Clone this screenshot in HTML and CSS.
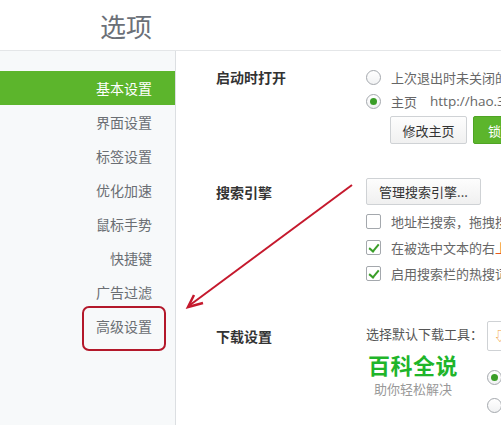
FILE: index.html
```html
<!DOCTYPE html>
<html lang="zh-CN">
<head>
  <meta charset="UTF-8" />
  <title>选项</title>
  <link rel="stylesheet" href="styles.css">
</head>
<body>
  <header class="top">
    <h1>选项</h1>
  </header>

  <div class="layout">
    <nav class="sidebar">
      <a class="nav-item active">基本设置</a>
      <a class="nav-item">界面设置</a>
      <a class="nav-item">标签设置</a>
      <a class="nav-item">优化加速</a>
      <a class="nav-item">鼠标手势</a>
      <a class="nav-item">快捷键</a>
      <a class="nav-item">广告过滤</a>
      <a class="nav-item">高级设置</a>
    </nav>

    <main class="content">
      <section class="section startup">
        <div class="section-label">启动时打开</div>
        <div class="section-body">
          <div class="opt-row"><span class="radio"></span><span>上次退出时未关闭的网页</span></div>
          <div class="opt-row"><span class="radio checked"></span><span>主页</span><span class="url">http://hao.360.cn/</span></div>
          <div class="btn-row">
            <button class="btn btn-home">修改主页</button>
            <button class="btn btn-green">锁定主页</button>
          </div>
        </div>
      </section>

      <section class="section search">
        <div class="section-label">搜索引擎</div>
        <div class="section-body">
          <button class="btn btn-wide">管理搜索引擎...</button>
          <div class="check-row"><span class="checkbox"></span><span>地址栏搜索，拖拽搜索时使用</span></div>
          <div class="check-row"><span class="checkbox checked"></span><span>在被选中文本的右<em class="hl">上</em>角显示</span></div>
          <div class="check-row"><span class="checkbox checked"></span><span>启用搜索栏的热搜词</span></div>
        </div>
      </section>

      <section class="section download">
        <div class="section-label">下载设置</div>
        <div class="section-body dl-body">
          <span class="dl-text">选择默认下载工具：</span>
          <div class="dl-col">
            <div class="select"><span class="dl-icon">⇩</span></div>
            <div class="dl-row"><span class="radio checked"></span></div>
            <div class="dl-row"><span class="radio"></span></div>
          </div>
        </div>
      </section>
    </main>
  </div>

  <div class="watermark">
    <div class="wm-title">百科全说</div>
    <div class="wm-sub">助你轻松解决</div>
  </div>

  <svg class="annotation" width="501" height="425" viewBox="0 0 501 425" xmlns="http://www.w3.org/2000/svg">
    <rect x="83" y="307" width="82" height="43" rx="6" fill="none" stroke="#b3182a" stroke-width="2"/>
    <line x1="352" y1="185" x2="190" y2="305" stroke="#c5192d" stroke-width="2"/>
    <polyline points="203,303 188,307 194,295" fill="none" stroke="#c5192d" stroke-width="2.5" stroke-linejoin="miter"/>
  </svg>
</body>
</html>
```

FILE: styles.css
```css
* {
  box-sizing: border-box;
  margin: 0;
  padding: 0;
}

html, body {
  width: 501px;
  height: 425px;
  overflow: hidden;
  background: #fff;
  font-family: "Noto Sans CJK SC", "Noto Sans", sans-serif;
  color: #333;
}

body {
  position: relative;
}

.top {
  height: 51px;
  border-bottom: 1px solid #e4e6e8;
  padding-left: 100px;
}

.top h1 {
  font-size: 26px;
  font-weight: 400;
  line-height: 52px;
  color: #6b7078;
}

.layout {
  display: flex;
  height: 374px;
}

.sidebar {
  width: 176px;
  flex: none;
  background: #f7f9fa;
  border-right: 1px solid #dcdfe2;
  padding-top: 20px;
  display: flex;
  flex-direction: column;
}

.nav-item {
  height: 34px;
  line-height: 34px;
  text-align: right;
  padding-right: 23px;
  font-size: 14px;
  color: #6a6e73;
}

.nav-item.active {
  background: #5cb52c;
  color: #fff;
}

.content {
  flex: 1;
  min-width: 0;
  overflow: hidden;
  padding: 14px 0 0 40px;
}

.section {
  display: flex;
}

.section-label {
  width: 150px;
  flex: none;
  font-size: 14px;
  font-weight: 700;
  color: #333;
  line-height: 24px;
}

.section-body {
  flex: 1;
  min-width: 0;
  white-space: nowrap;
  font-size: 13px;
  color: #666;
}

.opt-row {
  height: 24px;
  display: flex;
  align-items: center;
  gap: 10px;
}

.url {
  margin-left: 3px;
  font-family: "Open Sans", "Noto Sans", sans-serif;
  font-size: 13.5px;
}

.radio {
  width: 15px;
  height: 15px;
  flex: none;
  border: 1px solid #a4a8ad;
  border-radius: 50%;
  background: linear-gradient(#fff, #f1f2f3);
  position: relative;
}

.radio.checked::after {
  content: "";
  position: absolute;
  left: 3px;
  top: 3px;
  width: 7px;
  height: 7px;
  border-radius: 50%;
  background: #3a9e28;
}

.btn-row {
  display: flex;
  gap: 6px;
  margin-top: 3px;
  padding-left: 24px;
}

.btn {
  height: 28px;
  padding: 0 14px;
  font-family: inherit;
  font-size: 13px;
  color: #333;
  background: linear-gradient(#fdfdfd, #f0f0f0);
  border: 1px solid #cfd2d5;
  border-radius: 2px;
  flex: none;
}

.btn-home {
  width: 77px;
  padding: 0;
}

.btn-green {
  background: #5cb52c;
  border-color: #4fa424;
  color: #fff;
}

.search {
  margin-top: 34px;
}

.search .section-label {
  line-height: 28px;
}

.btn-wide {
  height: 27px;
  padding: 0 11px;
  width: 115px;
  margin-bottom: 3px;
}

.check-row {
  height: 26px;
  display: flex;
  align-items: center;
  gap: 10px;
}

.checkbox {
  width: 15px;
  height: 15px;
  flex: none;
  border: 1px solid #a4a8ad;
  border-radius: 2px;
  background: #fff;
  position: relative;
}

.checkbox.checked::after {
  content: "";
  position: absolute;
  left: 4px;
  top: 1px;
  width: 4px;
  height: 8px;
  border-right: 2px solid #3a9e28;
  border-bottom: 2px solid #3a9e28;
  transform: rotate(40deg);
}

.hl {
  font-style: normal;
  color: #e8581e;
}

.download {
  margin-top: 35px;
}

.download .section-label {
  line-height: 30px;
}

.dl-body {
  display: flex;
  gap: 4px;
}

.dl-text {
  line-height: 26px;
  color: #555;
}

.dl-col {
  display: flex;
  flex-direction: column;
}

.select {
  width: 120px;
  height: 30px;
  border: 1px solid #cfd2d5;
  border-radius: 2px;
  background: #fff;
  padding-left: 6px;
  margin-bottom: 12px;
}

.dl-icon {
  font-size: 12px;
  line-height: 28px;
  color: #f09a3a;
}

.dl-row {
  height: 28px;
  display: flex;
  align-items: center;
}

.watermark {
  position: absolute;
  left: 366px;
  top: 350px;
  text-align: center;
  width: 94px;
}

.wm-title {
  font-size: 22px;
  font-weight: 700;
  color: #1fb52a;
  line-height: 28px;
  letter-spacing: 0.5px;
}

.wm-sub {
  font-size: 13px;
  color: #999;
  line-height: 18px;
  margin-top: 2px;
}

.annotation {
  position: absolute;
  left: 0;
  top: 0;
  pointer-events: none;
}
```
